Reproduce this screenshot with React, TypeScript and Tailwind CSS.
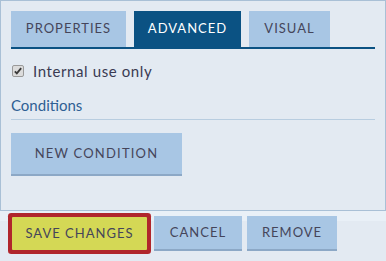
const tabs = [
  { label: "Properties", w: "w-[115px]", active: false },
  { label: "Advanced", w: "w-[107px]", active: true },
  { label: "Visual", w: "w-[81px]", active: false },
]

function CheckBox() {
  return (
    <span className="w-[12px] h-[12px] rounded-[2px] border border-[#9a9a9a] bg-[#dcdcdc] flex items-center justify-center">
      <svg viewBox="0 0 12 12" className="w-[10px] h-[10px]">
        <path d="M2.2 6.4 L4.6 8.8 L9.8 2.6" fill="none" stroke="#3a3a3a" strokeWidth="2.2" />
      </svg>
    </span>
  )
}

export default function App() {
  return (
    <div className="w-[386px] h-[261px] bg-[#e3eaf2] font-['Lato',sans-serif] text-[#3a3a52] flex flex-col">
      <div className="h-[211px] border border-[#a9c0d6] px-[10px] pt-[10px] flex flex-col">
        <div className="flex gap-[8px] border-b-2 border-[#0b5283]">
          {tabs.map((t) => (
            <div
              key={t.label}
              className={`${t.w} h-[36px] flex items-center justify-center uppercase text-[13px] tracking-[1px] ${
                t.active ? "bg-[#0b5283] text-white" : "bg-[#a8c6e4] text-[#45455a]"
              }`}
            >
              {t.label}
            </div>
          ))}
        </div>

        <label className="mt-[12px] flex items-center gap-[9px] text-[15px] leading-[20px] tracking-[0.6px] ml-[1px]">
          <CheckBox />
          Internal use only
        </label>

        <div className="mt-[14px] pb-[4px] border-b border-[#b8cde0] text-[15px] leading-[20px] text-[#2f5f94]">
          Conditions
        </div>

        <button className="mt-[13px] w-[171px] h-[43px] bg-[#a8c6e4] border-b-2 border-[#8ca8c6] uppercase text-[13px] tracking-[1.2px] text-[#45455a]">
          New Condition
        </button>
      </div>

      <div className="flex-1 bg-[linear-gradient(#e9f0f7_0_10px,#e3eaf2_10px)] pl-[12px] pt-[5px] flex items-start">
        <button className="mt-[1px] w-[135px] h-[33px] bg-[#d4d855] rounded-[1px] shadow-[0_0_0_4px_#b0262c] uppercase text-[13px] tracking-[1px] text-[#45455a]">
          Save Changes
        </button>
        <button className="ml-[7px] w-[88px] h-[35px] bg-[#a8c6e4] border-b-2 border-[#8ca8c6] uppercase text-[13px] tracking-[1px] text-[#45455a]">
          Cancel
        </button>
        <button className="ml-[5px] w-[90px] h-[35px] bg-[#a8c6e4] border-b-2 border-[#8ca8c6] uppercase text-[13px] tracking-[1px] text-[#45455a]">
          Remove
        </button>
      </div>
    </div>
  )
}
